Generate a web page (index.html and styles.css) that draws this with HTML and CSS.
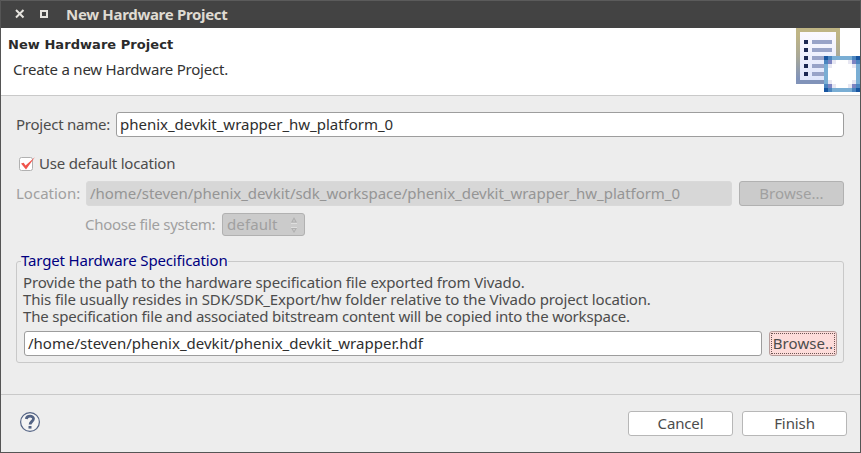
FILE: index.html
```html
<!DOCTYPE html>
<html lang="en">
<head>
<meta charset="utf-8">
<title>New Hardware Project</title>
<link rel="stylesheet" href="styles.css">
</head>
<body>
<div class="window">
  <div class="titlebar">
    <svg class="window-controls" width="42" height="12" viewBox="0 0 42 12" fill="none" stroke="#e6e4df">
      <path d="M3 2 10.500 9.500M10.500 2 3 9.500" stroke-width="2"/>
      <path d="M28 3h6v6h-6z" stroke-width="2"/>
    </svg>
    <span class="window-title">New Hardware Project</span>
  </div>
  <header class="header">
    <div>
      <h1 class="heading">New Hardware Project</h1>
      <p class="subtitle">Create a new Hardware Project.</p>
    </div>
    <svg class="banner" width="64" height="64" viewBox="0 0 64 64" shape-rendering="crispEdges">
      <defs>
        <linearGradient id="frame" x1="0" y1="0" x2="0" y2="1"><stop offset=".12" stop-color="#bfb585"/><stop offset=".5" stop-color="#aaa997"/><stop offset=".9" stop-color="#8193b9"/></linearGradient>
        <linearGradient id="paper" x1="0" y1="0" x2="0" y2="1"><stop offset="0" stop-color="#fbf9ff"/><stop offset="1" stop-color="#dfe6fb"/></linearGradient>
      </defs>
      <path fill="url(#frame)" d="M0 0h44v56H0z"/>
      <path fill="url(#paper)" d="M4 4h36v48H4z"/>
      <path fill="#1b2853" d="M8 12h4v4H8zM8 20h4v4H8zM8 28h4v4H8zM8 36h4v4H8zM8 44h4v4H8z"/>
      <path fill="#98a3c8" d="M16 12h20v4H16zM16 20h20v4H16zM16 28h20v4H16zM16 36h20v4H16zM16 44h20v4H16z"/>
      <path fill="#7aaed4" d="M28 28h36v36H28z"/>
      <path fill="#fff" d="M32 32h28v28H32z"/>
      <path fill="#e7e7f2" d="M36 32h4v4h-4zM32 36h4v4h-4zM52 32h4v4h-4zM56 36h4v4h-4zM32 52h4v4h-4zM36 56h4v4h-4zM56 52h4v4h-4zM52 56h4v4h-4z"/>
      <path fill="#7c84c2" d="M32 32h4v4h-4zM56 32h4v4h-4zM32 56h4v4h-4zM56 56h4v4h-4z"/>
      <path fill="#1755a0" d="M28 28h4v4h-4zM60 28h4v4h-4zM28 60h4v4h-4zM60 60h4v4h-4z"/>
      <path fill="#4b85bf" d="M32 28h4v4h-4zM28 32h4v4h-4zM56 28h4v4h-4zM60 32h4v4h-4zM28 56h4v4h-4zM32 60h4v4h-4zM60 56h4v4h-4zM56 60h4v4h-4z"/>
    </svg>
  </header>
  <main class="content">
    <div class="row name-row">
      <label class="name-label">Project name:</label>
      <div class="field name-field">phenix_devkit_wrapper_hw_platform_0</div>
    </div>
    <div class="row check-row">
      <svg class="checkbox" width="18" height="16" viewBox="0 0 18 16">
        <rect x=".5" y="1.500" width="13" height="13" rx="2" fill="#fff" stroke="#b1b1b1"/>
        <path d="M2 7.600 4.700 6.800 6.500 9.600 15.800 1.200 7 13.500z" fill="#f0544c"/>
      </svg>
      <span class="check-label">Use default location</span>
    </div>
    <div class="row location-row disabled">
      <label class="location-label">Location:</label>
      <div class="field location-field">/home/steven/phenix_devkit/sdk_workspace/phenix_devkit_wrapper_hw_platform_0</div>
      <div class="button location-browse"><span class="wide">Browse...</span></div>
    </div>
    <div class="row system-row disabled">
      <label class="system-label">Choose file system:</label>
      <div class="combo"><span class="combo-text">default</span>
        <svg width="8" height="16" viewBox="0 0 8 16"><path d="M1 5.500 4 0l3 5.500zM1 11h6l-3 5z" fill="#b0b0b0"/><path d="M1 6.500h6M1 10.500h6" stroke="#dedede"/><path d="M3 4.500h2L4 2.500zM3 12h2l-1 2z" fill="#d0d0d0"/></svg>
      </div>
    </div>
    <fieldset class="group">
      <legend>Target Hardware Specification</legend>
      <p class="line line-a">Provide the path to the hardware specification file exported from Vivado.</p>
      <p class="line line-b">This file usually resides in SDK/SDK_Export/hw folder relative to the Vivado project location.</p>
      <p class="line line-c">The specification file and associated bitstream content will be copied into the workspace.</p>
      <div class="row file-row">
        <div class="field file-field">/home/steven/phenix_devkit/phenix_devkit_wrapper.hdf</div>
        <div class="button focused"><span class="focus-ring">Browse..</span></div>
      </div>
    </fieldset>
  </main>
  <footer class="footer">
    <svg class="help" width="22" height="22" viewBox="0 0 22 22" fill="none" stroke="#536384">
      <circle cx="11" cy="11" r="9.400" stroke-width="1.200" fill="#f4f4f4"/>
      <path d="M7.300 8C7.800 4.200 14.500 4.300 14.500 7.800c0 2.500-3.200 2.700-3.400 5.700" stroke-width="2.800"/>
      <path d="M11 15v2.600" stroke-width="3"/>
    </svg>
    <div class="button cancel">Cancel</div>
    <div class="button finish">Finish</div>
  </footer>
</div>
</body>
</html>
```
FILE: styles.css
```css
* { box-sizing: border-box; }
body {
  margin: 0;
  font: 15px/17px "Noto Sans", sans-serif;
  color: #4c4c4c;
  white-space: nowrap;
}
.window {
  width: 861px;
  height: 453px;
  display: flex;
  flex-direction: column;
  background: #ededed;
  border: 1px solid #555;
  border-top: 0;
  overflow: hidden;
}
.titlebar {
  height: 28px;
  margin: 0 -1px;
  padding-left: 13px;
  display: flex;
  align-items: center;
  background: #434343;
  border-top: 1px solid #5b5b5b;
}
.window-controls { margin: -1px 11px 0 0; }
.window-title {
  font-weight: 700;
  letter-spacing: -0.315px;
  color: #dfdbd2;
}
.header {
  height: 68px;
  padding-left: 7px;
  display: flex;
  justify-content: space-between;
  background: #fff;
  border-bottom: 1px solid #c9c9c9;
  color: #333;
}
.heading {
  margin: 8px 0 0;
  font: bold 13px/17px "DejaVu Sans", sans-serif;
  letter-spacing: 0.05px;
  color: #2b2b2b;
}
.subtitle {
  margin: 8px 0 0 5px;
  letter-spacing: -0.22px;
}
.content {
  height: 298px;
  padding: 16px 16px 0 15px;
}
.row { display: flex; align-items: center; }
.field {
  height: 25px;
  padding: 0 3px;
  line-height: 22px;
  background: #fff;
  border: 1px solid #9d9d9d;
  border-radius: 3px;
  color: #2e2e2e;
}
.row label, .check-label, .combo-text { padding-bottom: 1px; }
.name-label { width: 100px; letter-spacing: -0.24px; }
.name-field { flex: 1; letter-spacing: -0.02px; }
.check-row { height: 18px; margin: 18px 0 8px; padding-left: 3px; }
.checkbox { margin-right: 2px; }
.row .check-label { padding-bottom: 2px; letter-spacing: -0.21px; }
.disabled { color: #a0a0a0; }
.location-label { width: 70px; letter-spacing: 0; }
.location-field {
  width: 646px;
  letter-spacing: -0.03px;
  background: #d7d7d7;
  border-color: #d9d9d9;
  color: #959595;
}
.button {
  height: 25px;
  line-height: 22px;
  text-align: center;
  border: 1px solid #b7b7b7;
  border-radius: 3px;
  background: #fff;
}
.location-browse { width: 105px; margin-left: 7px; background: #cbcbcb; border-color: #b1b1b1; }
.wide { letter-spacing: 0.05px; }
.system-row { margin-top: 7px; padding-left: 69px; }
.system-label { width: 137px; letter-spacing: -0.28px; }
.combo {
  width: 83px;
  height: 23px;
  padding: 0 6px 0 4px;
  display: flex;
  align-items: center;
  justify-content: space-between;
  background: #cbcbcb;
  border: 1px solid #b1b1b1;
  border-radius: 3px;
}
.combo-text { letter-spacing: 0.1px; }
.group {
  height: 111px;
  margin: 16px 0 0;
  padding: 4px 6px 0 7px;
  border: 1px solid #c9c9c9;
  border-radius: 3px;
}
.group legend {
  height: 18px;
  margin-left: -3px;
  padding: 0;
  line-height: 16px;
  letter-spacing: -0.15px;
  color: #000080;
}
.line { margin: 0 0 0 -1px; }
.line-a { letter-spacing: -0.13px; }
.line-b { letter-spacing: -0.13px; }
.line-c { letter-spacing: -0.195px; }
.file-row { margin-top: 6px; }
.file-field { width: 738px; letter-spacing: 0.01px; }
.focused {
  width: 68px;
  margin-left: 7px;
  padding: 1px;
  background: #fddcda;
  border-color: #b79d9b;
}
.focus-ring {
  display: block;
  height: 21px;
  line-height: 18px;
  border: 1px dotted #6c5553;
  letter-spacing: 0.06px;
}
.footer {
  flex: 1;
  display: flex;
  align-items: flex-start;
  padding: 16px 13px 0 18px;
  border-top: 1px solid #c9c9c9;
}
.help { margin-right: auto; }
.cancel { width: 105px; letter-spacing: -0.15px; }
.finish { width: 105px; margin-left: 9px; letter-spacing: -0.1px; }
```
